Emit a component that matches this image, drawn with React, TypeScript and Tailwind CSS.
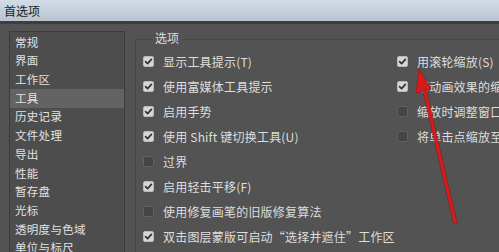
import React from 'react';

const leftItems = [
  '常规',
  '界面',
  '工作区',
  '工具',
  '历史记录',
  '文件处理',
  '导出',
  '性能',
  '暂存盘',
  '光标',
  '透明度与色域',
  '单位与标尺',
];

const leftOptions: [string, boolean][] = [
  ['显示工具提示(T)', true],
  ['使用富媒体工具提示', true],
  ['启用手势', true],
  ['使用 Shift 键切换工具(U)', true],
  ['过界', false],
  ['启用轻击平移(F)', true],
  ['使用修复画笔的旧版修复算法', false],
  ['双击图层蒙版可启动“选择并遮住”工作区', true],
];

const rightOptions: [string, boolean][] = [
  ['用滚轮缩放(S)', true],
  ['带动画效果的缩放(Z)', true],
  ['缩放时调整窗口大小(R)', false],
  ['将单击点缩放至中心(K)', false],
];

function Checkbox({ checked }: { checked: boolean }) {
  if (!checked) {
    return <span className="w-[11px] h-[11px] shrink-0 rounded-[2px] border border-[#626262] bg-[#454545]" />;
  }
  return (
    <span className="w-[11px] h-[11px] shrink-0 rounded-[2px] border border-[#b9b9b9] bg-[#d6d6d6] flex items-center justify-center">
      <svg width="9" height="9" viewBox="0 0 9 9">
        <path d="M1.6 4.6 L3.6 6.6 L7.4 2.4" fill="none" stroke="#333" strokeWidth="1.7" strokeLinecap="round" strokeLinejoin="round" />
      </svg>
    </span>
  );
}

function OptionRow({ label, checked }: { label: string; checked: boolean }) {
  return (
    <div className="flex items-center h-[25px] gap-[9px]">
      <Checkbox checked={checked} />
      <span className="whitespace-nowrap text-[12px] tracking-[0.2px] leading-none text-[#dedede]">{label}</span>
    </div>
  );
}

export default function App() {
  return (
    <div className="relative w-[499px] h-[252px] overflow-hidden bg-[#535353] font-['Noto_Sans_CJK_SC','Noto_Sans',sans-serif]">
      <div className="h-[21px] flex items-center pl-[4px] bg-gradient-to-b from-[#d3dce6] to-[#b8c4d0] text-[12px] text-[#1c1c1c]">
        首选项
      </div>
      <div className="h-[3px] bg-[#3d3d3d]" />

      <div className="flex pt-[7px] pl-[9px] gap-[10px]">
        <div className="w-[116px] shrink-0 h-[240px] border border-[#3b3b3b] bg-[#4d4d4d] pt-[1px]">
          {leftItems.map((item) => (
            <div
              key={item}
              className={`h-[18.7px] flex items-center pl-[5px] text-[11.5px] tracking-[0.3px] text-[#e2e2e2] whitespace-nowrap ${
                item === '工具' ? 'bg-[#636363]' : ''
              }`}
            >
              {item}
            </div>
          ))}
        </div>

        <div className="relative mt-[8px] w-[420px] shrink-0 h-[240px] border border-[#464646] pt-[9px] pl-[7px]">
          <span className="absolute left-[15px] top-[-10px] px-[4px] bg-[#535353] text-[12px] leading-[16px] text-[#dedede]">
            选项
          </span>
          <div className="flex">
            <div className="w-[254px] shrink-0">
              {leftOptions.map(([label, checked]) => (
                <OptionRow key={label} label={label} checked={checked} />
              ))}
            </div>
            <div>
              {rightOptions.map(([label, checked]) => (
                <OptionRow key={label} label={label} checked={checked} />
              ))}
            </div>
          </div>
        </div>
      </div>

      {/* red annotation arrow */}
      <svg className="absolute inset-0 pointer-events-none" width="499" height="252" viewBox="0 0 499 252">
        <line x1="455" y1="222" x2="424" y2="88" stroke="#8a1010" strokeWidth="4.5" strokeLinecap="round" opacity="0.6" />
        <line x1="455" y1="222" x2="424" y2="88" stroke="#d41c1c" strokeWidth="3.2" strokeLinecap="round" />
        <polygon points="419,69 431,89 416,93" fill="#d41c1c" stroke="#b01515" strokeWidth="0.8" />
      </svg>
    </div>
  );
}
